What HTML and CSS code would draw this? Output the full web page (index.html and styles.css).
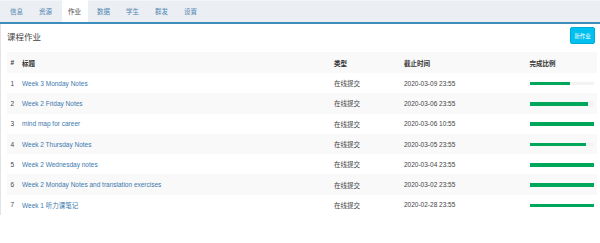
FILE: index.html
```html
<!DOCTYPE html>
<html lang="zh">
<head>
<meta charset="utf-8">
<title>课程作业</title>
<link rel="stylesheet" href="styles.css">
</head>
<body>
<nav class="tabs">
  <a class="tab">信息</a>
  <a class="tab">资源</a>
  <a class="tab active">作业</a>
  <a class="tab">数据</a>
  <a class="tab">学生</a>
  <a class="tab">群发</a>
  <a class="tab">设置</a>
</nav>
<section class="box">
  <div class="box-head">
    <h3 class="box-title">课程作业</h3>
    <button class="btn-new">新作业</button>
  </div>
  <table class="hw">
    <colgroup>
      <col class="c-num"><col class="c-title"><col class="c-type"><col class="c-date"><col class="c-prog">
    </colgroup>
    <thead>
      <tr><th>#</th><th>标题</th><th>类型</th><th>截止时间</th><th>完成比例</th></tr>
    </thead>
    <tbody>
      <tr><td>1</td><td><a>Week 3 Monday Notes</a></td><td>在线提交</td><td class="date">2020-03-09 23:55</td><td><div class="track"><div class="bar" style="width:63%"></div></div></td></tr>
      <tr><td>2</td><td><a>Week 2 Friday Notes</a></td><td>在线提交</td><td class="date">2020-03-06 23:55</td><td><div class="track"><div class="bar" style="width:92%"></div></div></td></tr>
      <tr><td>3</td><td><a>mind map for career</a></td><td>在线提交</td><td class="date">2020-03-06 10:55</td><td><div class="track"><div class="bar" style="width:100%"></div></div></td></tr>
      <tr><td>4</td><td><a>Week 2 Thursday Notes</a></td><td>在线提交</td><td class="date">2020-03-05 23:55</td><td><div class="track"><div class="bar" style="width:89%"></div></div></td></tr>
      <tr><td>5</td><td><a>Week 2 Wednesday notes</a></td><td>在线提交</td><td class="date">2020-03-04 23:55</td><td><div class="track"><div class="bar" style="width:100%"></div></div></td></tr>
      <tr><td>6</td><td><a>Week 2 Monday Notes and translation exercises</a></td><td>在线提交</td><td class="date">2020-03-02 23:55</td><td><div class="track"><div class="bar" style="width:100%"></div></div></td></tr>
      <tr><td>7</td><td><a>Week 1 听力课笔记</a></td><td>在线提交</td><td class="date">2020-02-28 23:55</td><td><div class="track"><div class="bar" style="width:100%"></div></div></td></tr>
    </tbody>
  </table>
</section>
</body>
</html>
```

FILE: styles.css
```css
* { box-sizing: border-box; }
html, body {
  margin: 0;
  padding: 0;
  background: #fff;
  font-family: "Liberation Sans", Arial, "Noto Sans CJK SC", sans-serif;
  color: #333;
}
.tabs {
  display: flex;
  gap: 3px;
  height: 24px;
  padding-left: 3.5px;
  background: #ebeef2;
  border-top: 1px solid #f3f5f7;
  border-bottom: 2px solid #3c8dbc;
}
.tab {
  display: flex;
  align-items: center;
  padding: 0 6.5px;
  font-size: 6.5px;
  color: #4f86b3;
  margin-top: -1px;
}
.tab.active {
  background: #fff;
  color: #444;
}
.box {
  border-left: 1px solid #e3e3e3;
  padding: 3px 3px 0 6px;
  height: 191px;
}
.box-head {
  display: flex;
  justify-content: space-between;
  align-items: center;
  height: 17px;
  margin-bottom: 8px;
}
.box-title {
  margin: 0;
  font-weight: normal;
  font-size: 8.5px;
  color: #444;
}
.btn-new {
  width: 25px;
  height: 17px;
  margin-right: 2px;
  padding: 0;
  border: 1px solid #00acd6;
  border-radius: 2px;
  background: #00c0ef;
  color: #fff;
  font-family: inherit;
  font-size: 5.5px;
}
.hw {
  width: 590px;
  border-collapse: collapse;
  table-layout: fixed;
  font-size: 6.5px;
}
.c-num { width: 11.5px; }
.c-title { width: 312px; }
.c-type { width: 70px; }
.c-date { width: 125.5px; }
.c-prog { width: 71px; }
.hw th {
  height: 21px;
  text-align: left;
  font-weight: bold;
  color: #333;
  padding: 0 3.5px;
  background: #f9f9f9;
}
.hw td {
  height: 20.3px;
  padding: 0 3.5px;
  vertical-align: middle;
  color: #444;
}
.hw tbody tr:nth-child(even) td { background: #f9f9f9; }
.hw a { color: #3c78ad; }
.date { color: #555; }
.track {
  height: 3.5px;
  background: #f3f3f3;
  margin-top: 1px;
}
.bar {
  height: 100%;
  background: #00a65a;
}
```
